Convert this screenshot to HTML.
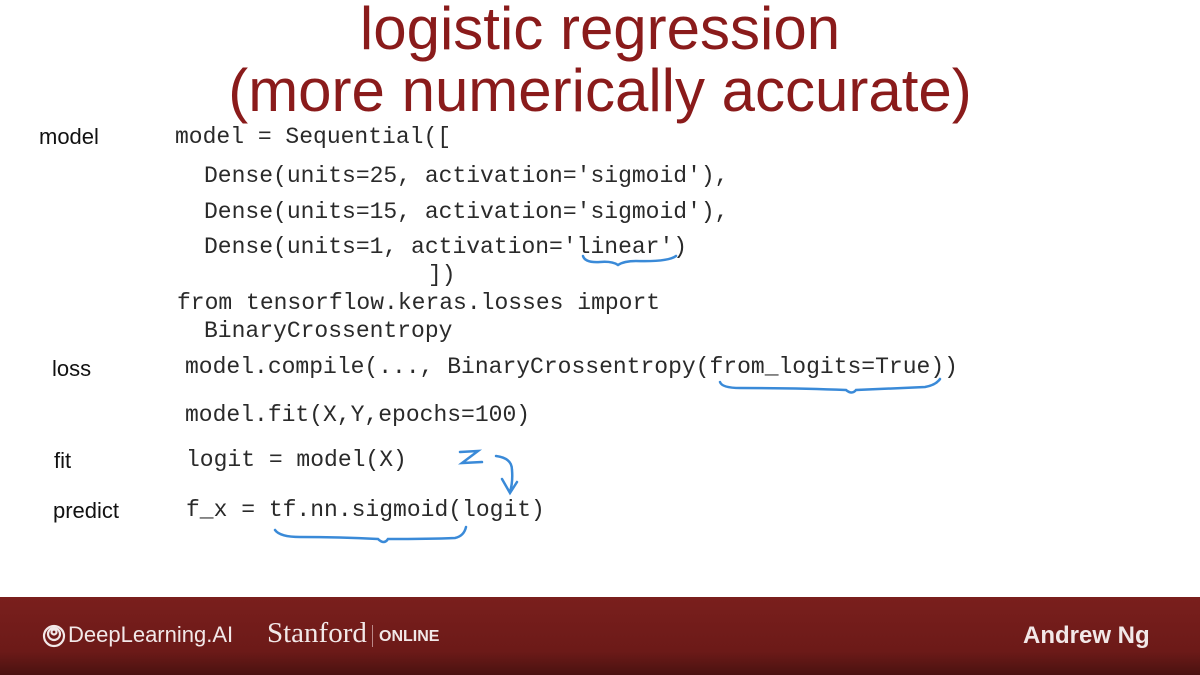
<!DOCTYPE html>
<html><head><meta charset="utf-8"><style>
body{margin:0;width:1200px;height:675px;overflow:hidden;background:#fff;position:relative;font-family:"Liberation Sans",sans-serif}
.t{position:absolute;left:0;width:1200px;text-align:center;color:#8a1b1b;font-size:60px;line-height:62px}
.c{position:absolute;font-family:"Liberation Mono",monospace;font-size:23px;line-height:28px;color:#2a2a2a;white-space:pre}
.l{position:absolute;font-size:22px;line-height:28px;color:#111}
.foot{position:absolute;left:0;top:597px;width:1200px;height:78px;background:linear-gradient(#7a1f1d,#6c1a18 70%,#4a1210)}
.foot div{position:absolute;color:#f2e8e8}
</style></head><body>
<div class="t" style="top:-2px">logistic regression</div>
<div class="t" style="top:60px">(more numerically accurate)</div>
<div class="l" style="left:39px;top:123px">model</div>
<div class="l" style="left:52px;top:355px">loss</div>
<div class="l" style="left:54px;top:447px">fit</div>
<div class="l" style="left:53px;top:497px">predict</div>
<div class="c" style="left:175px;top:123px">model = Sequential([</div>
<div class="c" style="left:204px;top:162px">Dense(units=25, activation='sigmoid'),</div>
<div class="c" style="left:204px;top:198px">Dense(units=15, activation='sigmoid'),</div>
<div class="c" style="left:204px;top:233px">Dense(units=1, activation='linear')</div>
<div class="c" style="left:428px;top:261px">])</div>
<div class="c" style="left:177px;top:289px">from tensorflow.keras.losses import</div>
<div class="c" style="left:204px;top:317px">BinaryCrossentropy</div>
<div class="c" style="left:185px;top:353px">model.compile(..., BinaryCrossentropy(from_logits=True))</div>
<div class="c" style="left:185px;top:401px">model.fit(X,Y,epochs=100)</div>
<div class="c" style="left:186px;top:446px">logit = model(X)</div>
<div class="c" style="left:186px;top:496px">f_x = tf.nn.sigmoid(logit)</div>
<svg style="position:absolute;left:0;top:0" width="1200" height="600" fill="none" stroke="#3a8ad8" stroke-width="2.5" stroke-linecap="round">
<path d="M583 256 Q585 263 600 262 Q612 261 618 265 Q624 261 636 261 Q668 262 676 256"/>
<path d="M720 382 Q722 388 740 388 Q800 388 846 390 Q852 395 856 390 Q900 388 925 387 Q936 385 940 379"/>
<path d="M275 530 Q280 537 300 537 Q340 537 378 539 Q384 545 388 539 Q430 539 455 538 Q464 536 466 527"/>
<path d="M460 452 L478 451 L462 463 L482 462"/>
<path d="M496 456 Q512 458 512 470 Q513 482 510 492 M502 479 L510 493 L517 482"/>
</svg>
<div class="foot">
<svg style="position:absolute;left:42px;top:27px" width="24" height="24" fill="none" stroke="#f2e8e8" stroke-width="2.2"><circle cx="12" cy="12" r="10"/><circle cx="12" cy="10" r="6"/><circle cx="12" cy="8" r="2.5"/></svg>
<div style="left:68px;top:25px;font-size:22px">DeepLearning.AI</div>
<div style="left:267px;top:20px;font-size:29px;font-family:'Liberation Serif',serif">Stanford</div>
<div style="left:372px;top:28px;width:1px;height:22px;background:#b88"></div>
<div style="left:379px;top:31px;font-size:16px;font-weight:bold">ONLINE</div>
<div style="left:1023px;top:25px;font-size:24px;font-weight:bold">Andrew Ng</div>
</div>
</body></html>
